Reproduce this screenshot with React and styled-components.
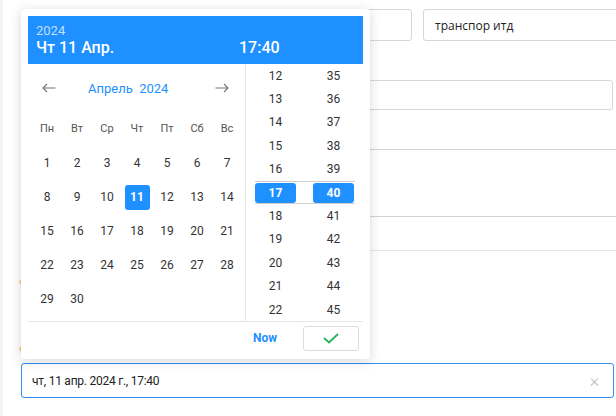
import React from "react";
import styled, { createGlobalStyle } from "styled-components";

const BLUE = "#1e90ff";

const GlobalStyle = createGlobalStyle`
  html, body {
    margin: 0;
    padding: 0;
  }
  body {
    background: #f3f4f6;
    font-family: Roboto, "Liberation Sans", sans-serif;
    color: #333;
  }
`;

const Page = styled.div`
  position: relative;
  width: 616px;
  height: 416px;
  overflow: hidden;
`;

const Panel = styled.div`
  margin-left: 3px;
  height: 100%;
  background: #fff;
  padding: 9px 2px 0 18px;
  box-sizing: border-box;
  display: flex;
  flex-direction: column;
`;

const Row = styled.div`
  display: flex;
  gap: 11px;
  margin-top: ${(p) => p.$top || 0}px;
`;

const Field = styled.div`
  flex-shrink: 0;
  width: ${(p) => p.$width}px;
  height: ${(p) => p.$height || 32}px;
  box-sizing: border-box;
  border: 1px solid ${(p) => (p.$active ? "#2f8ef0" : "#d4d7dd")};
  border-radius: 3px;
  padding: 0 11px 0 ${(p) => (p.$active ? 10 : 11)}px;
  display: flex;
  align-items: center;
  justify-content: space-between;
  font-family: ${(p) => (p.$plain ? '"Open Sans"' : "Roboto")}, "Liberation Sans", sans-serif;
  font-size: 12px;
  letter-spacing: ${(p) => (p.$plain ? 0 : -0.25)}px;
  color: #222;
`;

const Clear = styled.span`
  color: #bbb;
  font-size: 18px;
  font-weight: 300;
  line-height: 1;
  margin-right: 3px;
`;

const Divider = styled.div`
  height: 1px;
  margin-right: -4px;
  background: ${(p) => p.$color || "#d0d4dc"};
  margin-top: ${(p) => p.$top}px;
`;

const Label = styled.div`
  height: 12px;
  margin-top: ${(p) => p.$top}px;
  margin-left: -2px;
  font-size: 12px;
  line-height: 12px;
  color: #f0a93a;
`;

/* ---------- picker popup ---------- */

const Popup = styled.div`
  position: absolute;
  left: 21px;
  top: 9px;
  width: 349px;
  box-sizing: border-box;
  padding: 7px 7px 8px;
  background: #fff;
  border-radius: 3px;
  box-shadow: 0 2px 12px rgba(0, 0, 0, 0.16);
  font-family: Roboto, "Liberation Sans", sans-serif;
`;

const Header = styled.div`
  height: 48px;
  box-sizing: border-box;
  background: ${BLUE};
  color: #fff;
  padding: 7px 8px 0;
`;

const Year = styled.div`
  font-size: 13px;
  line-height: 15px;
  color: rgba(255, 255, 255, 0.72);
`;

const HeadLine = styled.div`
  display: flex;
  font-size: 16px;
  font-weight: 500;
  line-height: 19px;
`;

const HeadDate = styled.span`
  width: 203px;
`;

const Body = styled.div`
  display: grid;
  grid-template-columns: 218px 117px;
  height: 257px;
`;

const Calendar = styled.div`
  border-right: 1px solid #e6e6e6;
  padding: 0 4px;
`;

const Nav = styled.div`
  height: 48px;
  display: flex;
  align-items: center;
  padding: 0 12px 0 10px;
`;

const Arrow = styled.svg`
  width: 14px;
  height: 10px;
  margin-left: ${(p) => (p.$right ? "auto" : "0")};
`;

const Title = styled.span`
  margin-left: 32px;
  color: ${BLUE};
  font-size: 13px;
  white-space: pre;
`;

const Grid = styled.div`
  display: grid;
  grid-template-columns: repeat(7, 30px);
  grid-auto-rows: 34px;
`;

const WeekDay = styled.div`
  display: flex;
  align-items: center;
  justify-content: center;
  font-size: 11px;
  color: #555;
  height: 33px;
`;

const Day = styled.div`
  display: flex;
  align-items: center;
  justify-content: center;
  font-size: 12px;
  color: #333;

  span {
    width: 25px;
    height: 25px;
    display: flex;
    align-items: center;
    justify-content: center;
    border-radius: 3px;
    background: ${(p) => (p.$selected ? BLUE : "transparent")};
    color: ${(p) => (p.$selected ? "#fff" : "#333")};
    font-weight: ${(p) => (p.$selected ? 700 : 400)};
  }
`;

const Times = styled.div`
  padding: 0 8px 0 9px;
  overflow: hidden;
`;

const TimeRow = styled.div`
  display: grid;
  grid-template-columns: 41px 41px;
  column-gap: 17px;
  height: 23.4px;
  box-sizing: border-box;
  align-items: center;
  border-top: 1px solid ${(p) => (p.$selected ? "#cfcfcf" : "transparent")};
  border-bottom: 1px solid ${(p) => (p.$selected ? "#cfcfcf" : "transparent")};
`;

const TimeCell = styled.div`
  height: 20px;
  display: flex;
  align-items: center;
  justify-content: center;
  border-radius: 3px;
  font-size: 12px;
  background: ${(p) => (p.$selected ? BLUE : "transparent")};
  color: ${(p) => (p.$selected ? "#fff" : "#333")};
  font-weight: ${(p) => (p.$selected ? 700 : 400)};
`;

const Footer = styled.div`
  border-top: 1px solid #e6e6e6;
  height: 29px;
  display: flex;
  align-items: flex-end;
  justify-content: flex-end;
  padding-right: 4px;
`;

const NowButton = styled.span`
  color: ${BLUE};
  font-size: 12px;
  font-weight: 700;
  align-self: center;
  margin-top: 3px;
  margin-right: 26px;
`;

const OkButton = styled.div`
  width: 56px;
  height: 25px;
  box-sizing: border-box;
  border: 1px solid #dcdcdc;
  border-radius: 3px;
  display: flex;
  align-items: center;
  justify-content: center;
`;

const weekDays = ["Пн", "Вт", "Ср", "Чт", "Пт", "Сб", "Вс"];
const days = Array.from({ length: 30 }, (_, i) => i + 1);
const hours = [12, 13, 14, 15, 16, 17, 18, 19, 20, 21, 22];

function Picker() {
  return (
    <Popup>
      <Header>
        <Year>2024</Year>
        <HeadLine>
          <HeadDate>Чт 11 Апр.</HeadDate>
          <span>17:40</span>
        </HeadLine>
      </Header>
      <Body>
        <Calendar>
          <Nav>
            <Arrow viewBox="0 0 14 10">
              <path d="M13.5 5H1M5 1L1 5l4 4" fill="none" stroke="#777" strokeWidth="1.1" />
            </Arrow>
            <Title>{"Апрель  2024"}</Title>
            <Arrow $right viewBox="0 0 14 10">
              <path d="M0.5 5H13M9 1l4 4-4 4" fill="none" stroke="#777" strokeWidth="1.1" />
            </Arrow>
          </Nav>
          <Grid>
            {weekDays.map((d) => (
              <WeekDay key={d}>{d}</WeekDay>
            ))}
          </Grid>
          <Grid>
            {days.map((d) => (
              <Day key={d} $selected={d === 11}>
                <span>{d}</span>
              </Day>
            ))}
          </Grid>
        </Calendar>
        <Times>
          {hours.map((h) => (
            <TimeRow key={h} $selected={h === 17}>
              <TimeCell $selected={h === 17}>{h}</TimeCell>
              <TimeCell $selected={h === 17}>{h + 23}</TimeCell>
            </TimeRow>
          ))}
        </Times>
      </Body>
      <Footer>
        <NowButton>Now</NowButton>
        <OkButton>
          <svg width="16" height="11" viewBox="0 0 16 11">
            <polyline
              points="1,5 6,9.5 15,1"
              fill="none"
              stroke="#22b45a"
              strokeWidth="1.8"
            />
          </svg>
        </OkButton>
      </Footer>
    </Popup>
  );
}

export default function App() {
  return (
    <>
      <GlobalStyle />
      <Page>
        <Panel>
          <Row>
            <Field $width={391} />
            <Field $width={200} $plain>
              транспор итд
            </Field>
          </Row>
          <Row $top={39}>
            <Field $width={592} $height={30} />
          </Row>
          <Divider $top={39} />
          <Divider $top={66} />
          <Divider $top={33} $color="#e3e5e8" />
          <Label $top={27}>*</Label>
          <Label $top={55}>*</Label>
          <Row $top={6}>
            <Field $width={593} $height={35} $active>
              <span>чт, 11 апр. 2024 г., 17:40</span>
              <Clear>×</Clear>
            </Field>
          </Row>
        </Panel>
        <Picker />
      </Page>
    </>
  );
}
